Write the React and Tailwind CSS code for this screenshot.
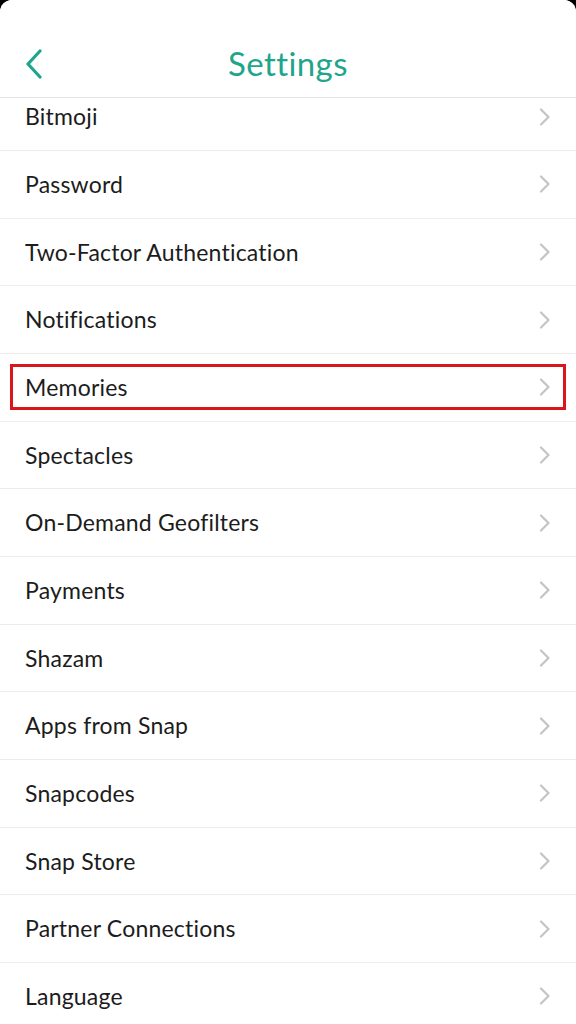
import React from "react";

const items = [
  "Bitmoji",
  "Password",
  "Two-Factor Authentication",
  "Notifications",
  "Memories",
  "Spectacles",
  "On-Demand Geofilters",
  "Payments",
  "Shazam",
  "Apps from Snap",
  "Snapcodes",
  "Snap Store",
  "Partner Connections",
  "Language",
];

function Chevron() {
  return (
    <svg width="12" height="18" viewBox="0 0 12 18" fill="none">
      <path d="M2 1.5 L9.5 9 L2 16.5" stroke="#c4c4c4" strokeWidth="2.2" strokeLinecap="round" strokeLinejoin="round" />
    </svg>
  );
}

export default function App() {
  return (
    <div className="w-[576px] h-[1024px] bg-black overflow-hidden" style={{ fontFamily: "Lato, 'Open Sans', sans-serif" }}>
      <div className="w-full h-full bg-white rounded-t-[12px] flex flex-col overflow-hidden">
        <div className="relative h-[98px] shrink-0 border-b border-[#e4e4e4] flex items-center justify-center z-10 bg-white">
          <div className="absolute left-[24px] top-[49px]">
            <svg width="20" height="30" viewBox="0 0 20 30" fill="none">
              <path d="M16 2 L4 15 L16 28" stroke="#1fa58b" strokeWidth="3.2" strokeLinecap="round" strokeLinejoin="round" />
            </svg>
          </div>
          <span className="text-[33px] text-[#1fa58b] pt-[30px] tracking-[0.4px]">Settings</span>
        </div>
        <div className="flex-1 overflow-hidden">
          <div className="-mt-[14.67px]">
            {items.map((it) => (
              <div key={it} className="h-[67.67px] border-b border-[#ececec] px-[10px] flex items-center">
                <div
                  className={
                    "w-full h-[46px] flex items-center justify-between pl-[12px] pr-[12px] border-[3px] " +
                    (it === "Memories" ? "border-[#d9161c]" : "border-transparent")
                  }
                >
                  <span className="text-[23px] text-[#1c1c1c] tracking-[0.2px]">{it}</span>
                  <Chevron />
                </div>
              </div>
            ))}
          </div>
        </div>
      </div>
    </div>
  );
}
